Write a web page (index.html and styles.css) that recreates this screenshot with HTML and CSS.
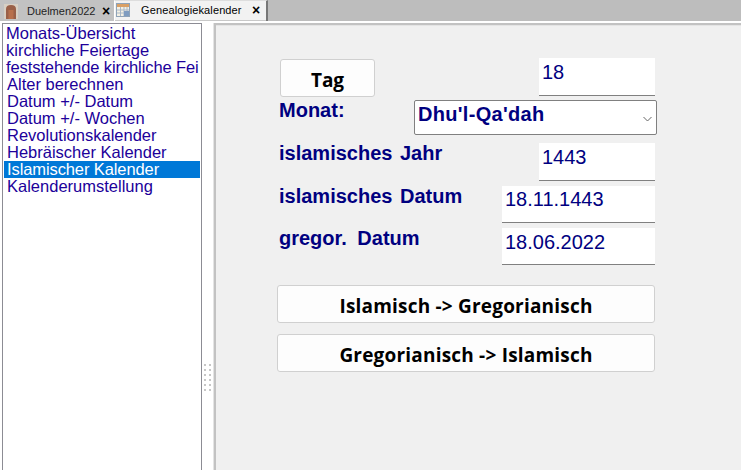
FILE: index.html
```html
<!DOCTYPE html>
<html lang="de">
<head>
<meta charset="utf-8">
<title>Genealogiekalender</title>
<link rel="stylesheet" href="styles.css">
</head>
<body>
<div class="tabbar">
  <div class="tab tab-inactive">
    <svg class="tab-icon" width="14" height="16" viewBox="0 0 14 16"><rect x="0" y="1" width="14" height="15" fill="#d8d0c4"/><path d="M2 16V6q0-4 5-4t5 4v10z" fill="#9a6048"/><rect x="4.5" y="7" width="5" height="9" fill="#b8704c"/></svg>
    <span class="tab-label">Duelmen2022</span>
    <span class="tab-close">×</span>
  </div>
  <div class="tab tab-active">
    <svg class="tab-icon" width="16" height="16" viewBox="0 0 16 16"><rect x="1.5" y="1.5" width="13" height="13" fill="#f4f0e4" stroke="#8fa3b8"/><rect x="2" y="2" width="12" height="3" fill="#d9a066"/><path d="M2 8h12M2 11h12M5.5 5v9M9 5v9M12 5v9" stroke="#a9b8c8" fill="none"/><rect x="9" y="9" width="5" height="5" fill="#7f9cc0"/></svg>
    <span class="tab-label">Genealogiekalender</span>
    <span class="tab-close">×</span>
  </div>
</div>
<div class="main">
  <ul class="list">
    <li class="first">Monats-Übersicht</li>
    <li class="first">kirchliche Feiertage</li>
    <li class="first tight">feststehende kirchliche Fei</li>
    <li>Alter berechnen</li>
    <li>Datum +/- Datum</li>
    <li>Datum +/- Wochen</li>
    <li>Revolutionskalender</li>
    <li>Hebräischer Kalender</li>
    <li class="selected">Islamischer Kalender</li>
    <li>Kalenderumstellung</li>
  </ul>
  <div class="splitter"><div class="grip"></div></div>
  <div class="form">
    <div class="row row-tag">
      <button class="btn btn-tag">Tag</button>
      <div class="field field-short">18</div>
    </div>
    <div class="row row-monat">
      <span class="label">Monat:</span>
      <div class="select">
        <span>Dhu'l-Qa'dah</span>
        <svg width="9" height="6" viewBox="0 0 9 6"><path d="M.5 1l4 4 4-4" fill="none" stroke="#666"/></svg>
      </div>
    </div>
    <div class="row row-jahr">
      <span class="label">islamisches Jahr</span>
      <div class="field field-short">1443</div>
    </div>
    <div class="row row-datum">
      <span class="label">islamisches Datum</span>
      <div class="field field-long">18.11.1443</div>
    </div>
    <div class="row row-gregor">
      <span class="label">gregor. Datum</span>
      <div class="field field-long">18.06.2022</div>
    </div>
    <button class="btn btn-wide btn-first">Islamisch -&gt; Gregorianisch</button>
    <button class="btn btn-wide btn-second">Gregorianisch -&gt; Islamisch</button>
  </div>
</div>
</body>
</html>
```
FILE: styles.css
```css
* { box-sizing: border-box; }
html, body { margin: 0; height: 100%; overflow: hidden; }
body { width: 741px; height: 470px; background: #fff; display: flex; flex-direction: column; font-family: "Liberation Sans", Arial, sans-serif; }
.tabbar { height: 21px; flex: none; display: flex; align-items: flex-start; background: #bdbdbd; }
.tab { display: flex; align-items: center; font-size: 11px; color: #222; }
.tab-inactive { width: 114px; height: 21px; background: #c2c2c2; padding-left: 4px; }
.tab-active { width: 154px; height: 21px; background: linear-gradient(#f2f2f2 19px, #c8c8c8 19px); border-top: 1px solid #ddd; border-left: 1px solid #fff; border-right: 2px solid #777; padding-bottom: 2px; }
.tab-icon { flex: none; }
.tab-inactive .tab-label { margin-left: 9px; width: 75px; }
.tab-active .tab-label { margin-left: 10px; width: 111px; color: #000; letter-spacing: .12px; }
.tab-close { font-size: 14px; font-weight: 700; line-height: 14px; color: #000; }
.main { flex: 1; display: flex; min-height: 0; padding-top: 2px; }
.list { width: 200px; flex: none; margin: 0 0 0 2px; padding: 1px 1px 0; list-style: none; border: 1px solid #8c8c94; border-bottom: 0; background: #fff; font-size: 16.5px; line-height: 17px; color: #20009a; white-space: nowrap; overflow: hidden; }
.list li { padding-left: 3px; height: 17px; overflow: hidden; }
.list .first { padding-left: 2px; }
.list .tight { letter-spacing: -.1px; }
.list .selected { background: #0078d7; color: #fff; letter-spacing: -.1px; }
.splitter { width: 12px; flex: none; background: #fff; padding: 341px 0 0 2px; }
.grip { width: 7px; height: 30px; background-image: conic-gradient(from 270deg at 2px 2px, #c6c6c6 25%, transparent 0); background-size: 5px 5px; }
.form { flex: 1; background: #f0f0f0; border-left: 2px solid #c2c2c2; border-top: 2px solid #c2c2c2; box-shadow: -1px 0 0 #e4e4e4, inset 0 1px 0 #e4e4e4; padding: 33px 0 0 61px; display: flex; flex-direction: column; align-items: flex-start; }
.row { width: 378px; display: flex; justify-content: space-between; align-items: flex-start; }
.label { font-size: 20px; line-height: 23px; font-weight: 700; color: #000080; word-spacing: 2px; margin-left: 2px; }
.field { background: #fff; border-bottom: 1px solid #808080; color: #000080; font-size: 20px; line-height: 20px; padding: 4px 0 0 3px; }
.field-short { width: 116px; height: 38px; }
.field-long { width: 153px; height: 37px; }
.btn { background: #fdfdfd; border: 1px solid #d0d0d0; border-radius: 3px; font-family: "Open Sans", sans-serif; font-weight: 700; color: #000; padding: 4px 0 0; }
.btn-tag { width: 95px; height: 38px; margin: 1px 0 0 3px; font-size: 19px; }
.row-tag { height: 42px; }
.row-monat { height: 43px; }
.row-monat .label { margin-top: -1px; }
.select { width: 243px; height: 35px; background: #fff; border: 1px solid #808080; border-radius: 2px; color: #000080; font-size: 20px; line-height: 23px; font-weight: 700; letter-spacing: .3px; display: flex; align-items: flex-start; justify-content: space-between; padding: 2px 4px 0 3px; margin-right: -2px; }
.select svg { margin-top: 13px; }
.row-jahr { height: 43px; }
.row-jahr .label { margin-top: -1px; }
.row-datum { height: 42px; }
.row-datum .label { margin-top: -1px; }
.row-datum .field { padding-top: 3px; }
.row-gregor { height: 42px; }
.row-gregor .label { margin-top: -1px; word-spacing: 5px; }
.btn-wide { width: 378px; height: 38px; font-size: 19px; letter-spacing: .2px; }
.btn-first { margin-top: 15px; }
.btn-second { margin-top: 11px; }
```
